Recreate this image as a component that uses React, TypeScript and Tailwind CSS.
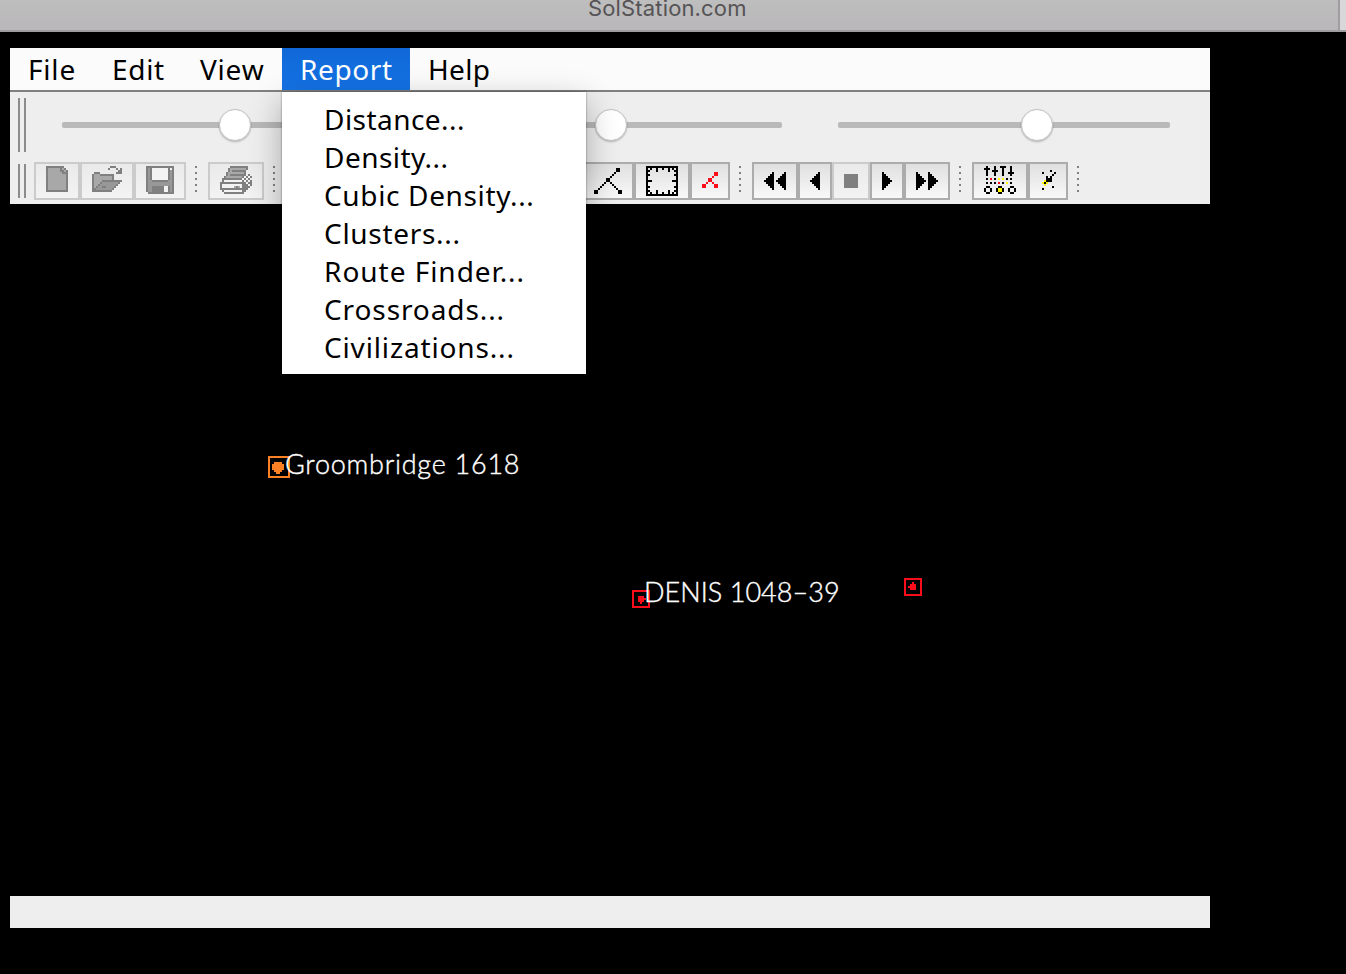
import React from "react";

const INK: Record<string, string> = {
  K: "#000000",
  D: "#808080",
  L: "#a8a8a8",
  M: "#989898",
  R: "#fc0d1b",
  Y: "#fffb0a",
  O: "#fd8024",
  W: "#f3f3f3",
};

/** Low-resolution bitmap icon; each character is a 2px cell. */
function Bitmap({ rows, className = "" }: { rows: string[]; className?: string }) {
  const w = Math.max(...rows.map((r) => r.length));
  return (
    <svg
      width={w * 2}
      height={rows.length * 2}
      viewBox={`0 0 ${w} ${rows.length}`}
      shapeRendering="crispEdges"
      className={`block shrink-0 ${className}`}
    >
      {rows.flatMap((r, y) =>
        r.split("").map((c, x) => (INK[c] ? <rect key={`${x}-${y}`} x={x} y={y} width={1} height={1} fill={INK[c]} /> : null)),
      )}
    </svg>
  );
}

const NEW = [
  "DDDDDDDDD..",
  "DLLLLLLDLD.",
  "DLLLLLLDDLD",
  "DLLLLLLLDDD",
  "DLLLLLLLLLD",
  "DLLLLLLLLLD",
  "DLLLLLLLLLD",
  "DLLLLLLLLLD",
  "DLLLLLLLLLD",
  "DLLLLLLLLLD",
  "DLLLLLLLLLD",
  "DLLLLLLLLLD",
  "DDDDDDDDDDD",
];
const OPEN = [
  ".........DDD...",
  "........D...D.D",
  ".............DD",
  ".DDD........DDD",
  "DLLLDDDDDDD....",
  "DLLLLLLLLLD....",
  "DLLLLLLLLLD....",
  "DLLLLDDDDDDDDDD",
  "DLLLDMMMMMMMMD.",
  "DLLDMMMMMMMMD..",
  "DLDMMDDMMMMD...",
  "DDMMMMMMMMD....",
  "DDDDDDDDDD.....",
];
const SAVE = [
  "DDDDDDDDDDDDDD",
  "DMDWWWWWWWWDWD",
  "DMDWWWWWWWWDMD",
  "DMDWWWWWWWWDMD",
  "DMDWWWWWWWWDMD",
  "DMDWWWWWWWWDMD",
  "DMDWWWWWWWWDMD",
  "DMMDDDDDDDDMMD",
  "DMMMMMMMMMMMMD",
  "DMMMMMMMMMMMMD",
  "DMMDDDDDDWWDMD",
  "DMMDDDDDDWWDMD",
  "DMMDDDDDDWWDMD",
  ".DDDDDDDDDDDDD",
];
const PRINT = [
  ".....DDDDDDDDD..",
  "....DLLLLLLLLD..",
  "....DLDDDDDDD...",
  "...DLLLLLLLLD...",
  "...DLDDDDDDDD.D.",
  "..DLLLLLLLLDWDWD",
  ".DDDDDDDDDDWDWD.",
  ".DWWWWWWWWWDWDWD",
  "DDDDDDDDDDDDDWDD",
  "DWWWWWWWWWWDDDWD",
  "DWWWWWWLDLWDDDD.",
  "DDDDDDDDDDDDDD..",
  ".DWWWWWWWWWDD...",
  "..DDDDDDDDDD....",
];
const LINKS = [
  "...........KK.",
  "...........KK.",
  "..........K...",
  ".........K....",
  "........K.....",
  "......KK......",
  "......KK......",
  ".....K..K.....",
  "....K....K....",
  "...K......K...",
  "..K........K..",
  "KK..........KK",
  "KK..........KK",
];
const FRAME = [
  "KKKKKKKKKKKKKKKK",
  "K.K..K..K..K.K.K",
  "KK...K.....K..KK",
  "K..............K",
  "KK............KK",
  "K..............K",
  "K..............K",
  "KKK..........KKK",
  "K..............K",
  "K..............K",
  "KK............KK",
  "K..............K",
  "KK...K.....K..KK",
  "K.K..K..K..K.K.K",
  "KKKKKKKKKKKKKKKK",
];
const ROUTE = [
  "......RR",
  "......RR",
  ".....R..",
  "...RR...",
  "...RR...",
  "..R..R..",
  "RR....RR",
  "RR....RR",
];
const BACK = ["....K", "...KK", "..KKK", ".KKKK", "KKKKK", ".KKKK", "..KKK", "...KK", "....K"];
const PLAY = BACK.map((r) => r.split("").reverse().join(""));
const REWIND = BACK.map((r) => `${r}.${r}`);
const FORWARD = PLAY.map((r) => `${r}.${r}`);
const STOP = Array(7).fill("DDDDDDD") as string[];
const MIXER = [
  ".K...K..KKK..K..",
  "KKK..K...K...K..",
  ".K..KKK..K...K..",
  ".K...K...K..KKK.",
  ".K...K...K...K..",
  "................",
  ".K.R.K.Y.Y.K.K..",
  "................",
  ".K.K.K.R.K.Y.K..",
  "................",
  ".KK....KK....KK.",
  "K..K..KYYK..K..K",
  "K..K..KYYK..K..K",
  ".KK....KK....KK.",
];
const POINTER = [
  "....K..",
  "K.....K",
  ".....K.",
  "..K.K..",
  "..KKK..",
  ".YKKK..",
  "YKY....",
  ".Y.....",
  ".....K.",
  "K......",
];

function Tool({ icon, className, off = false, pad = "pt-[2px]" }: { icon: string[]; className: string; off?: boolean; pad?: string }) {
  return (
    <button
      className={`flex h-[38px] shrink-0 items-start border-2 bg-linear-to-b ${pad} ${
        off ? "border-[#cbcbcb] from-[#eaeaea] to-[#f3f3f3]" : "border-[#acacac] from-[#e0e0e0] to-[#f8f8f8]"
      } ${className}`}
    >
      <Bitmap rows={icon} />
    </button>
  );
}

function Dots() {
  return (
    <div className="ml-[9px] mr-[11px] flex w-[2px] shrink-0 flex-col gap-1 pt-1">
      {[0, 1, 2, 3, 4].map((i) => (
        <span key={i} className="h-[2px] w-[2px] bg-[#808080]" />
      ))}
    </div>
  );
}

function Grip({ className }: { className: string }) {
  return <div className={`w-2 shrink-0 border-x-2 border-[#8c8c8c] ${className}`} />;
}

function Slider({ thumb }: { thumb: string }) {
  return (
    <div className="relative h-[6px] w-[332px] shrink-0 rounded-[2px] bg-[#b9b9b9]">
      <span
        className={`absolute -top-[13px] h-8 w-8 rounded-full border border-[#c4c4c4] bg-white shadow-[0_1px_2px_rgba(0,0,0,0.25)] ${thumb}`}
      />
    </div>
  );
}

const MENUS = [
  { label: "File", cls: "w-[84px] tracking-[0.8px]" },
  { label: "Edit", cls: "w-[88px] tracking-[0.7px]" },
  { label: "View", cls: "w-[100px] tracking-[0.8px]" },
  { label: "Report", cls: "w-[128px] tracking-[0.6px] bg-linear-to-b from-[#1068d6] to-[#1473e6] text-white" },
  { label: "Help", cls: "w-[100px] tracking-[0.3px]" },
];

const REPORTS = [
  { label: "Distance...", cls: "tracking-[0.45px]" },
  { label: "Density...", cls: "tracking-[0.45px]" },
  { label: "Cubic Density...", cls: "tracking-[0.65px]" },
  { label: "Clusters...", cls: "tracking-[0.7px]" },
  { label: "Route Finder...", cls: "tracking-[0.97px]" },
  { label: "Crossroads...", cls: "tracking-[0.9px]" },
  { label: "Civilizations...", cls: "tracking-[0.85px]" },
];

function MenuBar() {
  return (
    <nav className="relative flex h-[44px] border-b-2 border-[#808080] bg-[#fbfbfb]">
      {MENUS.map((m) => (
        <div key={m.label} className={`pl-[18px] text-[28px] leading-[42px] whitespace-nowrap ${m.cls}`}>
          {m.label}
        </div>
      ))}
      <div className="absolute top-[44px] left-[272px] z-20 h-[282px] w-[304px] bg-white pt-[8px] pl-[42px] shadow-[0_10px_30px_rgba(0,0,0,0.3),0_0_2px_rgba(0,0,0,0.45)]">
        {REPORTS.map((r) => (
          <div key={r.label} className="h-[38px] text-[28px] leading-[38px] whitespace-nowrap">
            <span className={r.cls}>{r.label}</span>
          </div>
        ))}
      </div>
    </nav>
  );
}

function ToolBars() {
  return (
    <div className="h-[112px] bg-[#eeeeee] pl-2">
      <div className="flex h-[70px] items-start pt-[6px]">
        <Grip className="h-[54px]" />
        <div className="ml-9 flex gap-14 pt-6">
          <Slider thumb="left-[157px]" />
          <Slider thumb="left-[145px]" />
          <Slider thumb="left-[183px]" />
        </div>
      </div>
      <div className="flex items-start">
        <Grip className="mt-[2px] mr-2 h-[34px]" />
        <Tool icon={NEW} off className="w-[46px] pl-[10px]" />
        <Tool icon={OPEN} off className="w-[54px] pl-[10px]" />
        <Tool icon={SAVE} off className="w-[52px] pl-[10px]" />
        <Dots />
        <Tool icon={PRINT} off className="w-[56px] pl-[10px]" />
        <Dots />
        <div className="w-[296px] shrink-0" />
        <Tool icon={LINKS} className="w-[52px] pl-[10px]" pad="pt-[4px]" />
        <Tool icon={FRAME} className="w-[56px] pl-[10px]" />
        <Tool icon={ROUTE} className="w-[40px] pl-[10px]" pad="pt-[8px]" />
        <Dots />
        <Tool icon={REWIND} className="w-[46px] pl-[10px]" pad="pt-[8px]" />
        <Tool icon={BACK} className="w-[34px] pl-[10px]" pad="pt-[8px]" />
        <Tool icon={STOP} off className="w-[38px] pl-[10px]" pad="pt-[10px]" />
        <Tool icon={PLAY} className="w-[34px] pl-[10px]" pad="pt-[8px]" />
        <Tool icon={FORWARD} className="w-[46px] pl-[10px]" pad="pt-[8px]" />
        <Dots />
        <Tool icon={MIXER} className="w-[56px] pl-[10px]" />
        <Tool icon={POINTER} className="w-[40px] pl-[12px]" pad="pt-[6px]" />
        <Dots />
      </div>
    </div>
  );
}

function Star({ place, box, dot }: { place: string; box: string; dot: string[] }) {
  return (
    <div className={`absolute border-2 ${place} ${box}`}>
      <Bitmap rows={dot} />
    </div>
  );
}

function StarMap() {
  return (
    <div className="relative h-[692px] bg-black text-[27px] leading-8 font-light whitespace-nowrap text-white [font-family:Lato,sans-serif] [-webkit-text-stroke:0.4px_white]">
      <Star
        place="top-[252px] left-[258px]"
        box="h-[22px] w-[22px] border-[#fd8024] pt-[4px] pl-[2px]"
        dot={[".OOOO.", "OOOOOO", "OOOOOO", "OOOOOO", ".OOOO.", "..OO.."]}
      />
      <div className="absolute top-[244px] left-[275px] tracking-[0.75px]">Groombridge 1618</div>
      <Star
        place="top-[386px] left-[622px]"
        box="h-[18px] w-[18px] border-[#fc0d1b] pt-[4px] pl-[4px]"
        dot={["RRR.", "RRRR", "RRR.", ".R.."]}
      />
      <div className="absolute top-[372px] left-[634px] tracking-[0.05px]">DENIS 1048–39</div>
      <Star
        place="top-[374px] left-[894px]"
        box="h-[18px] w-[18px] border-[#fc0d1b] pt-[2px] pl-[2px]"
        dot={["..R.", ".RRR", "RRRR", ".RRR"]}
      />
    </div>
  );
}

export default function App() {
  return (
    <div className="flex h-[974px] w-[1346px] flex-col overflow-hidden bg-black">
      <header className="flex h-8 shrink-0 border-b-2 border-[#9f9d9f] bg-linear-to-b from-[#bebebe] to-[#b9b7b9]">
        <div className="w-[1338px] pl-[588px] text-[22px] leading-4 text-[#555355] [font-family:Inter,sans-serif]">
          <span className="tracking-[0.15px]">SolStation.com</span>
        </div>
        <div className="w-2 border-l-2 border-[#9f9d9f] bg-[#d9d7d9]" />
      </header>
      <main className="mt-4 ml-[10px] w-[1200px] text-black [font-family:'Noto_Sans',sans-serif]">
        <MenuBar />
        <ToolBars />
        <StarMap />
        <footer className="h-8 bg-[#eeeeee]" />
      </main>
    </div>
  );
}
